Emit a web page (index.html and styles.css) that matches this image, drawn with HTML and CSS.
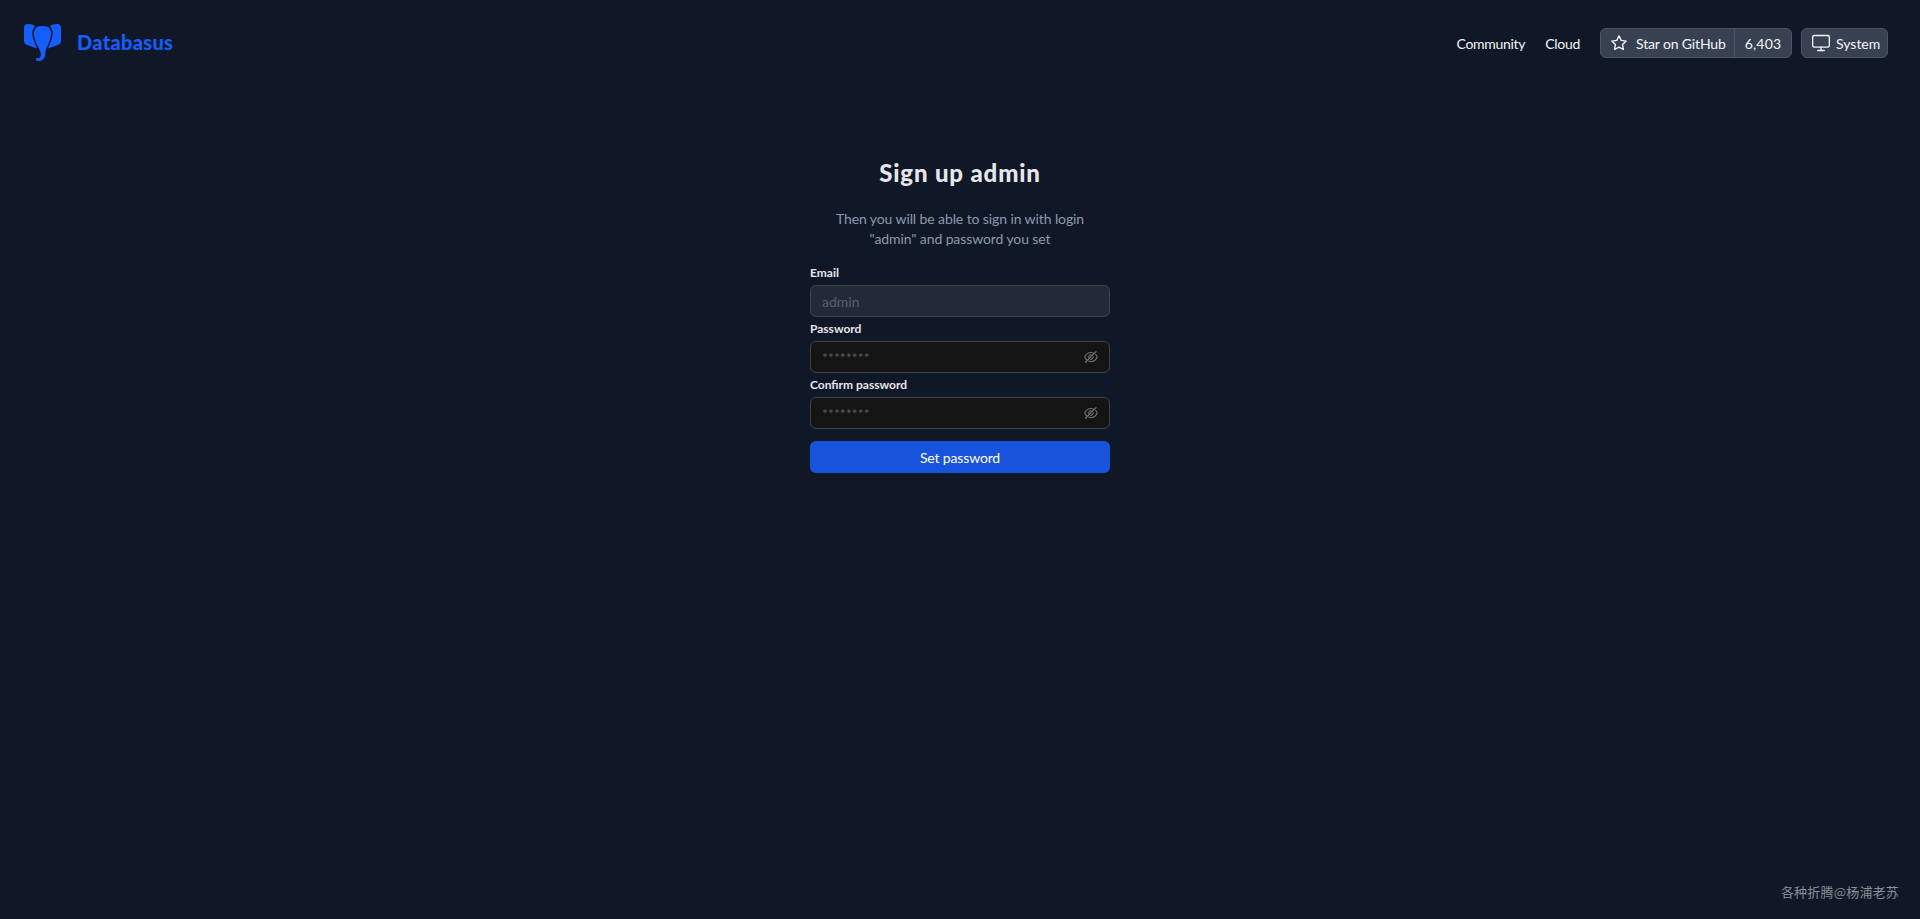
FILE: index.html
```html
<!DOCTYPE html>
<html lang="en">
<head>
    <meta charset="UTF-8">
    <meta name="viewport" content="width=device-width, initial-scale=1.0">
    <title>Databasus</title>
    <link rel="stylesheet" href="styles.css">
</head>
<body>
    <header class="topbar">
        <a class="brand" href="#">
            <svg class="brand-logo" viewBox="0 0 37 37" aria-hidden="true">
                <path d="M0 4C0 1.500 1.500 0 4 0C7 0 9.500 .8 11 2C8.500 5 8 8 8.500 11C9 15 11 20 13 24.500L3 21C1 20.200 0 19 0 17Z"/>
                <path d="M37 4C37 1.500 35.500 0 33 0C30 0 27.500 .8 26 2C28.500 5 29 8 28.500 11C28 15 26 20 24 24.500L34 21C36 20.200 37 19 37 17Z"/>
                <path d="M12.500 3C16 1.800 21 1.800 24.500 3C27 6 27.500 8.500 27 11C26.500 15 25 19 23 23C22 25 21.500 27 21.300 30C21 34 19 37 15 37C13.500 37 12.500 36.800 11.800 36L12 34C14.500 34.800 16.800 34 16.800 31C16.800 28 15.500 25 14 23C12 19 10.500 15 10 11C9.500 8.500 10 6 12.500 3Z"/>
            </svg>
            <span class="brand-name">Databasus</span>
        </a>
        <nav class="topnav">
            <a class="nav-link" href="#">Community</a>
            <a class="nav-link" href="#">Cloud</a>
            <div class="star-btn">
                <span class="star-main">
                    <svg class="icon icon-star" viewBox="0 0 24 24" aria-hidden="true"><path d="M12 2.500l2.950 5.980 6.600.960-4.780 4.650 1.130 6.570L12 17.560l-5.900 3.100 1.130-6.570-4.780-4.650 6.600-.960z"/></svg>
                    Star on GitHub
                </span>
                <span class="star-count">6,403</span>
            </div>
            <button class="theme-btn" type="button">
                <svg class="icon icon-monitor" viewBox="0 0 24 24" aria-hidden="true"><rect x="2" y="3" width="20" height="14" rx="2"/><path d="M8 21h8M12 17v4"/></svg>
                System
            </button>
        </nav>
    </header>

    <main class="signup">
        <h1 class="signup-title">Sign up admin</h1>
        <p class="signup-text">Then you will be able to sign in with login<br>"admin" and password you set</p>

        <label class="field-label" for="email">Email</label>
        <input class="field field-disabled" id="email" type="text" placeholder="admin" disabled>

        <label class="field-label" for="password">Password</label>
        <div class="field field-password">
            <input id="password" type="password" placeholder="********">
            <svg class="eye" viewBox="64 64 896 896" aria-hidden="true"><path d="M942.200 486.200Q889.470 375.110 816.700 305l-50.880 50.880C807.310 395.530 843.450 447.400 874.700 512 791.500 684.200 673.400 766 512 766q-72.670 0-133.870-22.380L323 798.750Q408 838 512 838q288.300 0 430.200-300.300a60.290 60.290 0 000-51.500zm-63.570-320.640L836 122.880a8 8 0 00-11.320 0L715.310 232.200Q624.860 186 512 186q-288.300 0-430.200 300.300a60.300 60.300 0 000 51.500q56.690 119.400 136.500 191.410L112.480 835a8 8 0 000 11.310L155.170 889a8 8 0 0011.310 0l712.150-712.120a8 8 0 000-11.320zM149.300 512C232.600 339.800 350.700 258 512 258c54.540 0 104.130 9.360 149.120 28.390l-70.300 70.300a176 176 0 00-238.130 238.130l-83.420 83.420C223.100 637.490 183.300 582.280 149.300 512zm246.700 0a112.110 112.110 0 01146.200-106.690L401.310 546.200A112 112 0 01396 512z"/><path d="M508 624c-3.460 0-6.870-.160-10.250-.470l-52.820 52.820a176.090 176.090 0 00227.420-227.420l-52.820 52.820c.310 3.380.470 6.790.470 10.250a111.940 111.940 0 01-112 112z"/></svg>
        </div>

        <label class="field-label" for="confirm">Confirm password</label>
        <div class="field field-password">
            <input id="confirm" type="password" placeholder="********">
            <svg class="eye" viewBox="64 64 896 896" aria-hidden="true"><path d="M942.200 486.200Q889.470 375.110 816.700 305l-50.880 50.880C807.310 395.530 843.450 447.400 874.700 512 791.500 684.200 673.400 766 512 766q-72.670 0-133.870-22.380L323 798.750Q408 838 512 838q288.300 0 430.200-300.300a60.290 60.290 0 000-51.500zm-63.570-320.640L836 122.880a8 8 0 00-11.320 0L715.310 232.200Q624.860 186 512 186q-288.300 0-430.200 300.300a60.300 60.300 0 000 51.500q56.690 119.400 136.500 191.410L112.480 835a8 8 0 000 11.310L155.170 889a8 8 0 0011.310 0l712.150-712.120a8 8 0 000-11.320zM149.300 512C232.600 339.800 350.700 258 512 258c54.540 0 104.130 9.360 149.120 28.390l-70.300 70.300a176 176 0 00-238.130 238.130l-83.420 83.420C223.100 637.490 183.300 582.280 149.300 512zm246.700 0a112.110 112.110 0 01146.200-106.690L401.310 546.200A112 112 0 01396 512z"/><path d="M508 624c-3.460 0-6.870-.160-10.250-.470l-52.820 52.820a176.090 176.090 0 00227.420-227.420l-52.820 52.820c.310 3.380.470 6.790.470 10.250a111.940 111.940 0 01-112 112z"/></svg>
        </div>

        <button class="submit-btn" type="button">Set password</button>
    </main>

    <div class="watermark">各种折腾@杨浦老苏</div>
</body>
</html>
```

FILE: styles.css
```css
* {
    box-sizing: border-box;
}

html, body {
    height: 100%;
}

body {
    margin: 0;
    background: #101828;
    color: #f3f4f6;
    font-family: "Lato", "Noto Sans", sans-serif;
    overflow: hidden;
}

.topbar {
    display: flex;
    justify-content: space-between;
    align-items: flex-start;
    padding: 24px 32px 0 24px;
}

.brand {
    display: flex;
    align-items: center;
    gap: 16px;
    text-decoration: none;
}

.brand-logo {
    width: 37px;
    height: 37px;
    fill: #155dfc;
}

.brand-name {
    color: #155dfc;
    font-size: 20px;
    font-weight: 900;
    letter-spacing: 0.3px;
    position: relative;
    top: -1px;
}

.topnav {
    display: flex;
    align-items: center;
    height: 30px;
    margin-top: 4px;
}

.nav-link {
    color: #f3f4f6;
    font-size: 14px;
    letter-spacing: -0.3px;
    text-decoration: none;
    margin-right: 20px;
}

.star-btn,
.theme-btn {
    display: flex;
    align-items: center;
    height: 30px;
    background: #374151;
    border: 1px solid #4b5563;
    border-radius: 6px;
    color: #f3f4f6;
    font-family: inherit;
    font-size: 14px;
}

.star-btn {
    width: 192px;
}

.star-main {
    display: flex;
    align-items: center;
    gap: 8px;
    width: 134px;
    height: 100%;
    padding-left: 9px;
    letter-spacing: -0.15px;
    border-right: 1px solid #4b5563;
}

.star-count {
    flex: 1;
    text-align: center;
    letter-spacing: 0.2px;
}

.theme-btn {
    gap: 5px;
    width: 87px;
    margin-left: 9px;
    padding: 0 0 0 9px;
}

.icon {
    fill: none;
    stroke: #f3f4f6;
    stroke-linecap: round;
    stroke-linejoin: round;
}

.icon-star {
    width: 18px;
    height: 18px;
    stroke-width: 1.8;
}

.icon-monitor {
    width: 20px;
    height: 20px;
    stroke-width: 1.6;
}

.signup {
    display: flex;
    flex-direction: column;
    width: 300px;
    margin: 0 auto;
    padding-top: 96px;
}

.signup-title {
    margin: 0 0 20px;
    color: #e5e7eb;
    font-size: 24px;
    line-height: 32px;
    font-weight: 900;
    letter-spacing: 0.85px;
    text-align: center;
}

.signup-text {
    margin: 0 0 18px;
    color: #8d99ae;
    font-size: 14px;
    line-height: 20px;
    letter-spacing: -0.1px;
    text-align: center;
}

.field-label {
    height: 12px;
    margin-bottom: 6px;
    color: #e5e7eb;
    font-size: 12px;
    line-height: 12px;
    font-weight: 700;
}

.field {
    width: 100%;
    height: 32px;
    margin-bottom: 6px;
    padding: 0 11px;
    border: 1px solid #424242;
    border-radius: 6px;
    font-family: inherit;
    font-size: 14px;
}

.field-disabled {
    background: #222938;
}

.field-disabled::placeholder {
    color: #5b606b;
}

.field-password {
    display: flex;
    align-items: center;
    background: #141414;
}

.field-password input {
    flex: 1;
    min-width: 0;
    height: 100%;
    padding: 0;
    border: none;
    outline: none;
    background: none;
    color: #f3f4f6;
    font-family: inherit;
    font-size: 14px;
}

.field-password input::placeholder {
    color: #5a5a5a;
}

.eye {
    width: 14px;
    height: 14px;
    fill: #6f6f6f;
}

.submit-btn {
    height: 32px;
    margin-top: 6px;
    border: none;
    border-radius: 6px;
    background: #1853db;
    color: #fff;
    font-family: inherit;
    font-size: 14px;
    letter-spacing: -0.15px;
}

.watermark {
    position: absolute;
    right: 21px;
    bottom: 18px;
    color: #8b8f97;
    font-family: "Noto Sans CJK SC", sans-serif;
    font-size: 13px;
    letter-spacing: 0.2px;
    line-height: 18px;
}
```
